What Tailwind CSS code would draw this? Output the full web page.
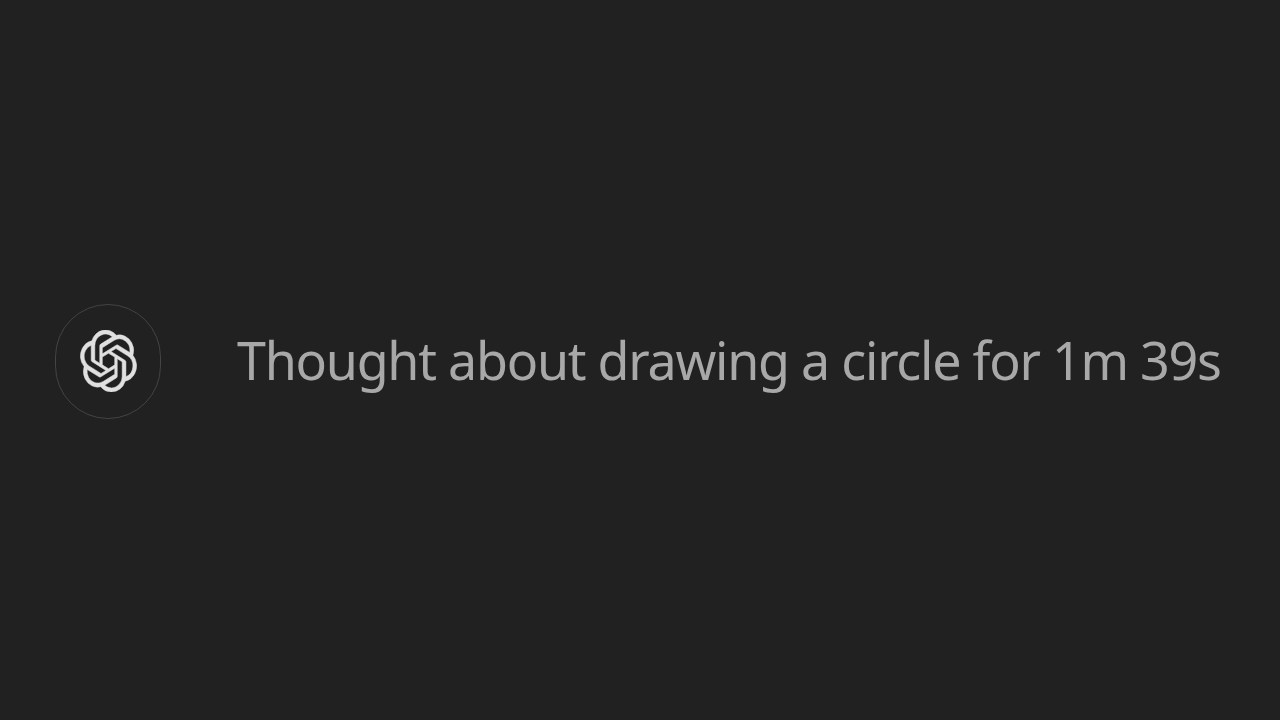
<!DOCTYPE html>
<html lang="en">
<head>
    <meta charset="UTF-8">
    <meta name="viewport" content="width=device-width, initial-scale=1.0">
    <script src="https://cdn.jsdelivr.net/npm/@tailwindcss/browser@4"></script>
    <title>Thought about drawing a circle</title>
</head>
<body class="bg-[#212121] w-screen h-screen overflow-hidden">
    <div class="flex flex-row items-center h-screen pl-[55px] pt-[2px]">
        <div class="flex items-center justify-center shrink-0 w-[106px] h-[115px] rounded-full border border-[#444444] blur-[0.6px]">
            <svg class="w-[57px] h-[62px] text-[#e0e0e0]" viewBox="0 0 24 24" preserveAspectRatio="none" fill="currentColor" stroke="currentColor" stroke-width="0.2">
                <path d="M22.282 9.821a5.985 5.985 0 0 0-.516-4.91 6.046 6.046 0 0 0-6.51-2.9A6.065 6.065 0 0 0 4.981 4.18a5.985 5.985 0 0 0-3.998 2.9 6.046 6.046 0 0 0 .743 7.097 5.98 5.98 0 0 0 .51 4.911 6.051 6.051 0 0 0 6.515 2.9A5.985 5.985 0 0 0 13.26 24a6.056 6.056 0 0 0 5.772-4.206 5.99 5.99 0 0 0 3.997-2.9 6.056 6.056 0 0 0-.747-7.073zM13.26 22.43a4.476 4.476 0 0 1-2.876-1.04l.141-.081 4.779-2.758a.795.795 0 0 0 .392-.681v-6.737l2.02 1.168a.071.071 0 0 1 .038.052v5.583a4.504 4.504 0 0 1-4.494 4.494zM3.6 18.304a4.47 4.47 0 0 1-.535-3.014l.142.085 4.783 2.759a.771.771 0 0 0 .78 0l5.843-3.369v2.332a.08.08 0 0 1-.033.062L9.74 19.95a4.5 4.5 0 0 1-6.14-1.646zM2.34 7.896a4.485 4.485 0 0 1 2.366-1.973V11.6a.766.766 0 0 0 .388.676l5.815 3.355-2.02 1.168a.076.076 0 0 1-.071 0l-4.83-2.786A4.504 4.504 0 0 1 2.34 7.872zm16.597 3.855l-5.833-3.387L15.119 7.2a.076.076 0 0 1 .071 0l4.83 2.791a4.494 4.494 0 0 1-.676 8.105v-5.678a.79.79 0 0 0-.407-.667zm2.01-3.023l-.141-.085-4.774-2.782a.776.776 0 0 0-.785 0L9.409 9.23V6.897a.066.066 0 0 1 .028-.061l4.83-2.787a4.5 4.5 0 0 1 6.68 4.66zm-12.64 4.135l-2.02-1.164a.08.08 0 0 1-.038-.057V6.075a4.5 4.5 0 0 1 7.375-3.453l-.142.08L8.704 5.46a.795.795 0 0 0-.393.681zm1.097-2.365l2.602-1.5 2.607 1.5v2.999l-2.597 1.5-2.607-1.5z"/>
            </svg>
        </div>
        <p class="ml-[76px] mb-[3px] whitespace-nowrap text-[52px] tracking-[-1.25px] leading-none text-[#a8a8a8] font-['Noto_Sans',sans-serif] font-normal blur-[0.7px]">Thought about drawing a circle for 1m 39s</p>
    </div>
</body>
</html>
